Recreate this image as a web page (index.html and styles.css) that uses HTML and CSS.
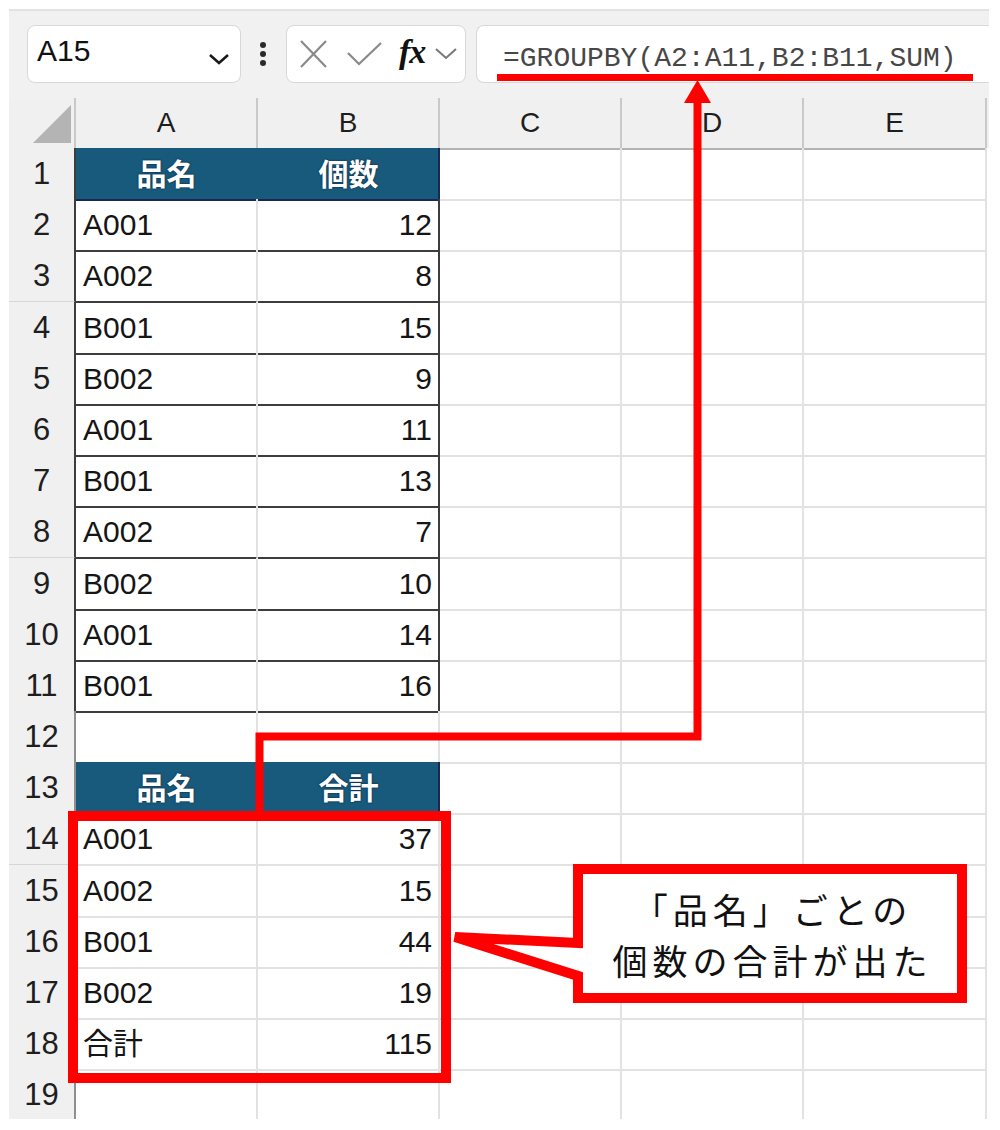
FILE: index.html
```html
<!DOCTYPE html>
<html lang="ja">
<head>
<meta charset="utf-8">
<title>GROUPBY</title>
<link rel="stylesheet" href="styles.css">
</head>
<body>
<div class="app">
  <div class="toolbar">
    <div class="namebox">
      <span class="nb-text">A15</span>
      <svg class="nb-chev" width="22" height="12" viewBox="0 0 22 12"><polyline points="2,2 11,10 20,2" fill="none" stroke="#1a1a1a" stroke-width="2.6"/></svg>
    </div>
    <div class="dots"><span></span><span></span><span></span></div>
    <div class="fxbox">
      <svg width="28" height="28" viewBox="0 0 28 28"><path d="M2 1 L27 27 M27 1 L2 27" stroke="#8a8a8a" stroke-width="2.2" fill="none"/></svg>
      <svg width="36" height="26" viewBox="0 0 36 26"><polyline points="1,12 12,23 34,2" fill="none" stroke="#8a8a8a" stroke-width="2.2"/></svg>
      <span class="fx">fx</span>
      <svg width="22" height="12" viewBox="0 0 22 12"><polyline points="1,1 11,10 21,1" fill="none" stroke="#777" stroke-width="2"/></svg>
    </div>
    <div class="formula">=GROUPBY(A2:A11,B2:B11,SUM)</div>
  </div>

  <div class="sheet">
    <div class="r colhdr">
      <div class="corner"><svg width="40" height="40" viewBox="0 0 40 40"><polygon points="39,1 39,39 1,39" fill="#b4b4b4"/></svg></div>
      <div class="ch nv">A</div><div class="ch nv">B</div><div class="ch">C</div><div class="ch">D</div><div class="ch">E</div>
    </div>
    <div class="r t1"><div class="rh">1</div><div class="c hd ha">品名</div><div class="c hd hb">個数</div><div class="c"></div><div class="c"></div><div class="c"></div></div>
    <div class="r t1"><div class="rh">2</div><div class="c da">A001</div><div class="c db">12</div><div class="c"></div><div class="c"></div><div class="c"></div></div>
    <div class="r t1"><div class="rh">3</div><div class="c da">A002</div><div class="c db">8</div><div class="c"></div><div class="c"></div><div class="c"></div></div>
    <div class="r t1"><div class="rh">4</div><div class="c da">B001</div><div class="c db">15</div><div class="c"></div><div class="c"></div><div class="c"></div></div>
    <div class="r t1"><div class="rh">5</div><div class="c da">B002</div><div class="c db">9</div><div class="c"></div><div class="c"></div><div class="c"></div></div>
    <div class="r t1"><div class="rh">6</div><div class="c da">A001</div><div class="c db">11</div><div class="c"></div><div class="c"></div><div class="c"></div></div>
    <div class="r t1"><div class="rh">7</div><div class="c da">B001</div><div class="c db">13</div><div class="c"></div><div class="c"></div><div class="c"></div></div>
    <div class="r t1"><div class="rh">8</div><div class="c da">A002</div><div class="c db">7</div><div class="c"></div><div class="c"></div><div class="c"></div></div>
    <div class="r t1"><div class="rh">9</div><div class="c da">B002</div><div class="c db">10</div><div class="c"></div><div class="c"></div><div class="c"></div></div>
    <div class="r t1"><div class="rh">10</div><div class="c da">A001</div><div class="c db">14</div><div class="c"></div><div class="c"></div><div class="c"></div></div>
    <div class="r t1"><div class="rh">11</div><div class="c da">B001</div><div class="c db">16</div><div class="c"></div><div class="c"></div><div class="c"></div></div>
    <div class="r"><div class="rh">12</div><div class="c nvb"></div><div class="c nvb"></div><div class="c"></div><div class="c"></div><div class="c"></div></div>
    <div class="r"><div class="rh">13</div><div class="c hd ha">品名</div><div class="c hd hb">合計</div><div class="c"></div><div class="c"></div><div class="c"></div></div>
    <div class="r"><div class="rh">14</div><div class="c">A001</div><div class="c num">37</div><div class="c"></div><div class="c"></div><div class="c"></div></div>
    <div class="r"><div class="rh">15</div><div class="c">A002</div><div class="c num">15</div><div class="c"></div><div class="c"></div><div class="c"></div></div>
    <div class="r"><div class="rh">16</div><div class="c">B001</div><div class="c num">44</div><div class="c"></div><div class="c"></div><div class="c"></div></div>
    <div class="r"><div class="rh">17</div><div class="c">B002</div><div class="c num">19</div><div class="c"></div><div class="c"></div><div class="c"></div></div>
    <div class="r"><div class="rh">18</div><div class="c">合計</div><div class="c num">115</div><div class="c"></div><div class="c"></div><div class="c"></div></div>
    <div class="r"><div class="rh">19</div><div class="c"></div><div class="c"></div><div class="c"></div><div class="c"></div><div class="c"></div></div>
  </div>
</div>

<svg class="overlay" width="1000" height="1130" viewBox="0 0 1000 1130">
  <rect x="497" y="74" width="476" height="7" fill="#ff0000"/>
  <path d="M259.5 811 V736.5 H697.5 V100" fill="none" stroke="#ff0000" stroke-width="8" stroke-linejoin="miter"/>
  <polygon points="697.5,80 684,103 711,103" fill="#ff0000"/>
  <rect x="73" y="816" width="373" height="262" fill="none" stroke="#ff0000" stroke-width="10"/>
  <polygon points="578,869 962,869 962,998 578,998 578,976 455,937 578,943" fill="#ffffff" stroke="#ff0000" stroke-width="10" stroke-miterlimit="4"/>
</svg>
<div class="callout-text"><span class="cl">「品名」ごとの</span><span class="cl">個数の合計が出た</span></div>
</body>
</html>
```

FILE: styles.css
```css
html, body {
  margin: 0;
  padding: 0;
}
body {
  width: 1000px;
  height: 1130px;
  position: relative;
  overflow: hidden;
  background: #ffffff;
  font-family: "Liberation Sans", "Noto Sans CJK JP", sans-serif;
  color: #151515;
}
.app {
  margin-left: 9px;
  padding-top: 9px;
  width: 980px;
}
.toolbar {
  height: 89px;
  box-sizing: border-box;
  background: #f1f1f1;
  border-top: 2px solid #e2e2e2;
  display: flex;
  align-items: flex-start;
  padding: 14px 0 0 18px;
}
.namebox {
  width: 214px;
  height: 58px;
  box-sizing: border-box;
  background: #fff;
  border: 1px solid #d8d8d8;
  border-radius: 8px;
  display: flex;
  align-items: center;
  justify-content: space-between;
  padding: 0 10px 0 9px;
}
.nb-text {
  font-size: 30px;
  line-height: 56px;
  color: #111;
  margin-top: -6px;
}
.nb-chev {
  margin-top: 10px;
}
.dots {
  width: 6px;
  margin: 17px 20px 0 19px;
  display: flex;
  flex-direction: column;
  gap: 3px;
}
.dots span {
  width: 6px;
  height: 6px;
  border-radius: 50%;
  background: #2a2a2a;
}
.fxbox {
  width: 180px;
  height: 58px;
  box-sizing: border-box;
  background: #fff;
  border: 1px solid #d8d8d8;
  border-radius: 8px;
  display: flex;
  align-items: center;
  padding: 0 4px 0 12px;
}
.fxbox svg:nth-child(1) { margin-right: 20px; }
.fxbox svg:nth-child(2) { margin-right: 16px; }
.fx {
  font-family: "Liberation Serif", serif;
  font-style: italic;
  font-weight: bold;
  font-size: 34px;
  line-height: 1;
  color: #111;
  margin-right: 10px;
  letter-spacing: -1px;
  margin-top: -4px;
}
.formula {
  flex: 1;
  margin-left: 10px;
  height: 58px;
  box-sizing: border-box;
  background: #fff;
  border: 1px solid #d8d8d8;
  border-right: none;
  border-radius: 8px 0 0 8px;
  padding: 7px 0 0 26px;
  font-family: "Liberation Mono", monospace;
  font-size: 28px;
  line-height: 52px;
  color: #474747;
  white-space: nowrap;
  overflow: hidden;
}

.sheet {
  height: 1021px;
  overflow: hidden;
}
.r {
  display: grid;
  grid-template-columns: 67px 182px 182px 182px 182px 183px;
  height: 51.2px;
}
.colhdr {
  height: 50px;
  background: #f0f0f0;
}
.corner {
  box-sizing: border-box;
  border-right: 2px solid #c9c9c9;
  border-bottom: 2px solid #9e9e9e;
  padding: 6px 0 0 23px;
}
.corner svg { display: block; }
.ch {
  box-sizing: border-box;
  border-right: 2px solid #c9c9c9;
  border-bottom: 2px solid #b3b3b3;
  text-align: center;
  font-size: 28px;
  line-height: 50px;
  color: #1e1e1e;
}
.ch.nv { border-bottom-color: #1c2657; }
.rh {
  box-sizing: border-box;
  background: #f0f0f0;
  border-right: 2px solid #8f8f8f;
  border-bottom: 2px solid #d6d6d6;
  text-align: center;
  font-size: 31px;
  line-height: 51px;
  color: #1e1e1e;
}
.t1 .rh { border-right-color: #3d3d3d; }
.c {
  box-sizing: border-box;
  border-right: 2px solid #e2e2e2;
  border-bottom: 2px solid #e2e2e2;
  padding: 0 6px 0 7px;
  font-size: 30px;
  line-height: 51px;
  color: #151515;
  white-space: nowrap;
  overflow: hidden;
}
.num { text-align: right; }
.da { border-bottom-color: #3d3d3d; }
.db { border-bottom-color: #3d3d3d; border-right-color: #3d3d3d; text-align: right; }
.hd {
  background: #175a7c;
  color: #ffffff;
  font-family: "Noto Sans CJK JP", sans-serif;
  font-weight: bold;
  text-align: center;
  font-size: 30px;
  line-height: 49px;
  border-bottom-color: #1c2657;
  text-shadow: 0 0 2px #0a1430;
}
.ha { border-right-color: #175a7c; }
.hb { border-right-color: #1c2657; }
.nvb { border-bottom-color: #1c2657; }

.overlay {
  position: absolute;
  left: 0;
  top: 0;
  pointer-events: none;
}
.callout-text {
  position: absolute;
  left: 583px;
  top: 874px;
  width: 374px;
  height: 119px;
  display: flex;
  flex-direction: column;
  align-items: center;
  justify-content: center;
  font-family: "Noto Sans CJK JP", sans-serif;
  font-size: 35px;
  line-height: 51px;
  letter-spacing: 5px;
  color: #111;
}
.cl {
  display: block;
  height: 51px;
  margin-right: -5px;
}
```
